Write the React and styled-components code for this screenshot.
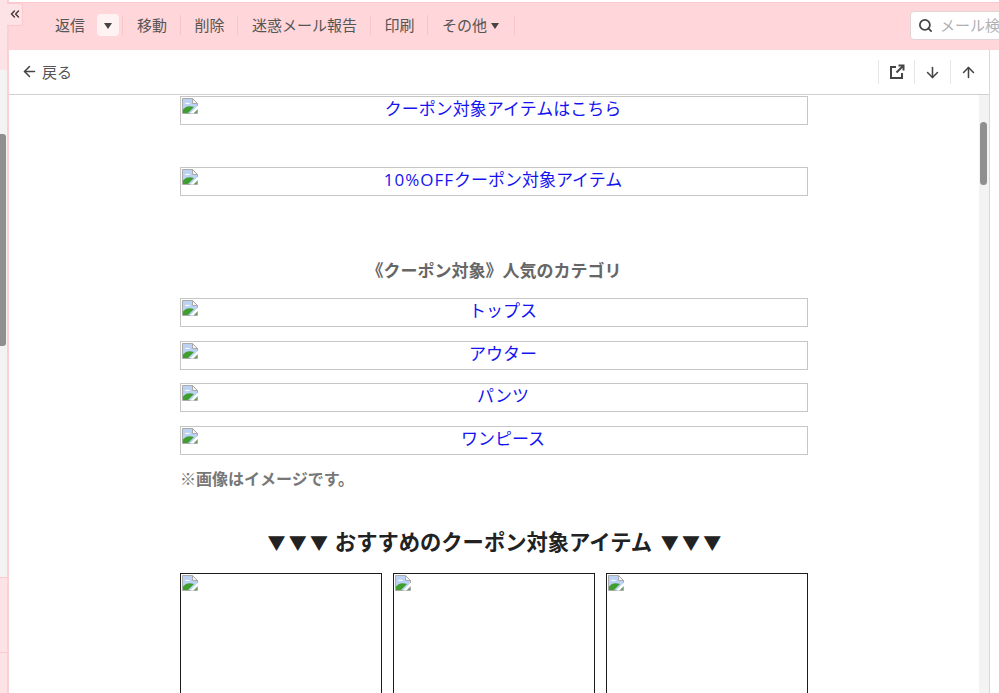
import React from 'react';
import styled, { createGlobalStyle } from 'styled-components';
import { ArrowDown, ArrowLeft, ArrowUp, ChevronsLeft, Search } from 'lucide-react';

const GlobalStyle = createGlobalStyle`
  html, body {
    margin: 0;
    height: 100%;
    overflow: hidden;
    background: #fff;
  }
  body {
    font-family: "Open Sans", "Noto Sans CJK JP", "Liberation Sans", sans-serif;
  }
`;

const Shell = styled.div`
  position: relative;
  display: flex;
  width: 999px;
  height: 693px;
  overflow: hidden;
`;

const SideRail = styled.div`
  display: flex;
  flex-direction: column;
  flex: 0 0 7px;
  background: #f3f3f3;
`;

const RailPink = styled.div`
  flex: 0 0 ${(p) => p.$h}px;
  background: #fde3e6;
  border-bottom: ${(p) => (p.$line ? '1px solid #fbc8ce' : '0')};
  box-sizing: border-box;
`;

const RailTrack = styled.div`
  flex: 0 0 508px;
  padding-top: 64px;
  box-sizing: border-box;
  border-bottom: 1px solid #fbc8ce;
`;

const RailThumb = styled.div`
  width: 6px;
  height: 212px;
  background: #8f8f8f;
  border-radius: 0 3px 3px 0;
`;

const Main = styled.div`
  flex: 1;
  display: flex;
  flex-direction: column;
  border-left: 2px solid #fbd0d5;
  min-width: 0;
`;

const Toolbar = styled.div`
  flex: 0 0 48px;
  margin-top: 2px;
  display: flex;
  align-items: center;
  justify-content: space-between;
  padding-left: 46px;
  background: #ffd6d9;
  border-top: 1px solid #fbc8ce;
  box-sizing: border-box;
  overflow: hidden;
`;

const Actions = styled.div`
  display: flex;
  align-items: center;
  margin-top: -3px;
`;

const Action = styled.span`
  display: flex;
  align-items: center;
  height: 20px;
  padding: 0 12.5px 2px 14px;
  border-right: 1px solid #fac5ca;
  box-sizing: border-box;
  color: #555;
  font-size: 15px;
  white-space: nowrap;
`;

const ReplyLabel = styled.span`
  color: #555;
  font-size: 15px;
  margin: 0 12px 2px 0;
`;

const CaretButton = styled.span`
  display: flex;
  align-items: center;
  justify-content: center;
  width: 22px;
  height: 22px;
  background: #fff2f3;
  border-radius: 4px;
  margin-right: 3px;
`;

const Divider = styled.span`
  width: 1px;
  height: 20px;
  background: #fac5ca;
`;

const Caret = styled.span`
  width: 0;
  height: 0;
  border-left: 4.5px solid transparent;
  border-right: 4.5px solid transparent;
  border-top: 6px solid #444;
  margin: ${(p) => (p.$inline ? '3px 2px 0 4px' : '1px 0 0')};
`;

const SearchBox = styled.div`
  flex: 0 0 100px;
  height: 29px;
  margin-right: -11px;
  margin-top: -3px;
  display: flex;
  align-items: center;
  gap: 7px;
  padding: 0 0 2px 7px;
  background: #fff;
  border: 1px solid #e2d4d5;
  border-radius: 4px;
  box-sizing: border-box;
  color: #b0b0b0;
  font-size: 15px;
  white-space: nowrap;

  svg {
    flex: 0 0 15px;
    margin-top: 2px;
  }
`;

const ReadArea = styled.div`
  flex: 1;
  display: flex;
  flex-direction: column;
  min-height: 0;
  border-right: 1px solid #d8d8d8;
  margin-right: 9px;
`;

const NavBar = styled.div`
  flex: 0 0 45px;
  display: flex;
  align-items: center;
  justify-content: space-between;
  padding-left: 12px;
  border-bottom: 1px solid #d0d0d0;
  box-sizing: border-box;
  background: #fff;
`;

const BackLink = styled.span`
  display: flex;
  align-items: center;
  gap: 4px;
  color: #555;
  font-size: 15px;
  margin-top: -2px;

  svg {
    color: #444;
  }
`;

const NavIcons = styled.div`
  display: flex;
  align-items: center;
  margin-right: 3px;
`;

const NavIcon = styled.span`
  display: flex;
  align-items: center;
  justify-content: center;
  width: 36px;
  height: 24px;
  color: #444;
  border-left: 1px solid #e6e6e6;
  box-sizing: border-box;
`;

const BodyRow = styled.div`
  flex: 1;
  display: flex;
  min-height: 0;
`;

const Scroller = styled.div`
  flex: 1;
  overflow: hidden;
  padding-top: 1px;
`;

const MailColumn = styled.div`
  width: 628px;
  margin: 0 auto;
`;

const ScrollTrack = styled.div`
  flex: 0 0 10px;
  padding: 27px 2px 0 1px;
  box-sizing: border-box;
  background: #f3f3f3;
`;

const ScrollThumb = styled.div`
  height: 63px;
  background: #8f8f8f;
  border-radius: 4px;
`;

const LinkBox = styled.a`
  display: flex;
  height: 29px;
  margin-top: ${(p) => p.$top || 0}px;
  border: 1px solid #c6c6c6;
  box-sizing: border-box;
  color: #1414f0;
  font-size: 17px;
  line-height: 24px;
  text-decoration: none;
`;

const LinkLabel = styled.span`
  flex: 1;
  text-align: center;
`;

const LatinRun = styled.span`
  letter-spacing: 1px;
`;

const StackedLinks = styled.div`
  display: flex;
  flex-direction: column;
  gap: 13.7px;
  margin-top: 15px;
`;

const CategoryTitle = styled.div`
  margin-top: 63px;
  height: 24px;
  line-height: 24px;
  text-align: center;
  color: #666;
  font-size: 17px;
  font-weight: 700;
`;

const Note = styled.div`
  margin-top: 12px;
  height: 24px;
  line-height: 24px;
  color: #777;
  font-size: 16px;
  font-weight: 700;
`;

const SectionTitle = styled.div`
  margin-top: 36px;
  height: 30px;
  line-height: 30px;
  padding-left: 4px;
  text-align: center;
  color: #222;
  font-size: 21.3px;
  font-weight: 700;
  white-space: nowrap;
`;

const Triangles = styled.span`
  font-size: 18px;
  letter-spacing: 3.3px;
  margin: ${(p) => (p.$end ? '0 0 0 3px' : '0 -2px 0 0')};
`;

const ProductGrid = styled.div`
  display: grid;
  grid-template-columns: repeat(3, 202px);
  justify-content: space-between;
  margin-top: 16px;
`;

const ProductCell = styled.div`
  height: 202px;
  border: 1px solid #1c1c1c;
  box-sizing: border-box;
`;

const CollapseTab = styled.div`
  position: absolute;
  left: 7px;
  top: 3px;
  width: 16px;
  height: 23px;
  display: flex;
  align-items: flex-start;
  justify-content: center;
  padding-top: 3px;
  box-sizing: border-box;
  background: #fde3e6;
  border: 1px solid #fbc8ce;
  border-left: 0;
  border-radius: 0 3px 3px 0;
  color: #4a3f42;
`;

const BrokenIcon = styled.svg`
  flex: 0 0 16px;
  display: block;
  margin: 1px;
`;

// chrome's broken image placeholder
function BrokenImage() {
  return (
    <BrokenIcon width="16" height="16" viewBox="0 0 16 16">
      <path d="M.5.5h10l5 5v10H.5z" fill="#bcd2f4" stroke="#aaa" />
      <path d="M10.500.5v5h5z" fill="#f4f4f4" stroke="#aaa" />
      <path d="M3 6q1-2 2.500-1 1.500-1 2.500 1z" fill="#fff" />
      <path d="M1 15v-3.500Q5 6.500 12 9L6 15z" fill="#3f9e2e" />
      <path d="M16 7.500 8 15.500h3.500L16 11z" fill="#fff" />
      <path d="M12 15l3-3v3z" fill="#6f9a62" />
    </BrokenIcon>
  );
}

function OpenWindowIcon() {
  return (
    <svg width="16" height="16" viewBox="0 0 16 16" fill="none" stroke="currentColor" strokeWidth="2">
      <path d="M7 3H2v11h11V9" />
      <path d="M7.500 8.500 14 2" />
      <path d="M9.500 1.500h5v5" />
    </svg>
  );
}

function ImageLink({ top, children }) {
  return (
    <LinkBox $top={top}>
      <BrokenImage />
      <LinkLabel>{children}</LinkLabel>
    </LinkBox>
  );
}

function App() {
  return (
    <Shell>
      <GlobalStyle />
      <SideRail>
        <RailPink $h={70} />
        <RailTrack>
          <RailThumb />
        </RailTrack>
        <RailPink $h={75} $line />
        <RailPink $h={40} />
      </SideRail>
      <CollapseTab>
        <ChevronsLeft size={14} strokeWidth={2.6} />
      </CollapseTab>
      <Main>
        <Toolbar>
          <Actions>
            <ReplyLabel>返信</ReplyLabel>
            <CaretButton><Caret /></CaretButton>
            <Divider />
            <Action>移動</Action>
            <Action>削除</Action>
            <Action>迷惑メール報告</Action>
            <Action>印刷</Action>
            <Action>その他<Caret $inline /></Action>
          </Actions>
          <SearchBox>
            <Search size={15} color="#444" strokeWidth={2.8} />
            メール検
          </SearchBox>
        </Toolbar>
        <ReadArea>
          <NavBar>
            <BackLink>
              <ArrowLeft size={17} strokeWidth={2.2} />
              戻る
            </BackLink>
            <NavIcons>
              <NavIcon><OpenWindowIcon /></NavIcon>
              <NavIcon><ArrowDown size={17} strokeWidth={2.2} /></NavIcon>
              <NavIcon><ArrowUp size={17} strokeWidth={2.2} /></NavIcon>
            </NavIcons>
          </NavBar>
          <BodyRow>
            <Scroller>
              <MailColumn>
                <ImageLink>クーポン対象アイテムはこちら</ImageLink>
                <ImageLink top={42}><LatinRun>10%OFF</LatinRun>クーポン対象アイテム</ImageLink>
                <CategoryTitle>《クーポン対象》人気のカテゴリ</CategoryTitle>
                <StackedLinks>
                  <ImageLink>トップス</ImageLink>
                  <ImageLink>アウター</ImageLink>
                  <ImageLink>パンツ</ImageLink>
                  <ImageLink>ワンピース</ImageLink>
                </StackedLinks>
                <Note>※画像はイメージです。</Note>
                <SectionTitle>
                  <Triangles>▼▼▼</Triangles> おすすめのクーポン対象アイテム <Triangles $end>▼▼▼</Triangles>
                </SectionTitle>
                <ProductGrid>
                  <ProductCell><BrokenImage /></ProductCell>
                  <ProductCell><BrokenImage /></ProductCell>
                  <ProductCell><BrokenImage /></ProductCell>
                </ProductGrid>
              </MailColumn>
            </Scroller>
            <ScrollTrack>
              <ScrollThumb />
            </ScrollTrack>
          </BodyRow>
        </ReadArea>
      </Main>
    </Shell>
  );
}

export default App;
